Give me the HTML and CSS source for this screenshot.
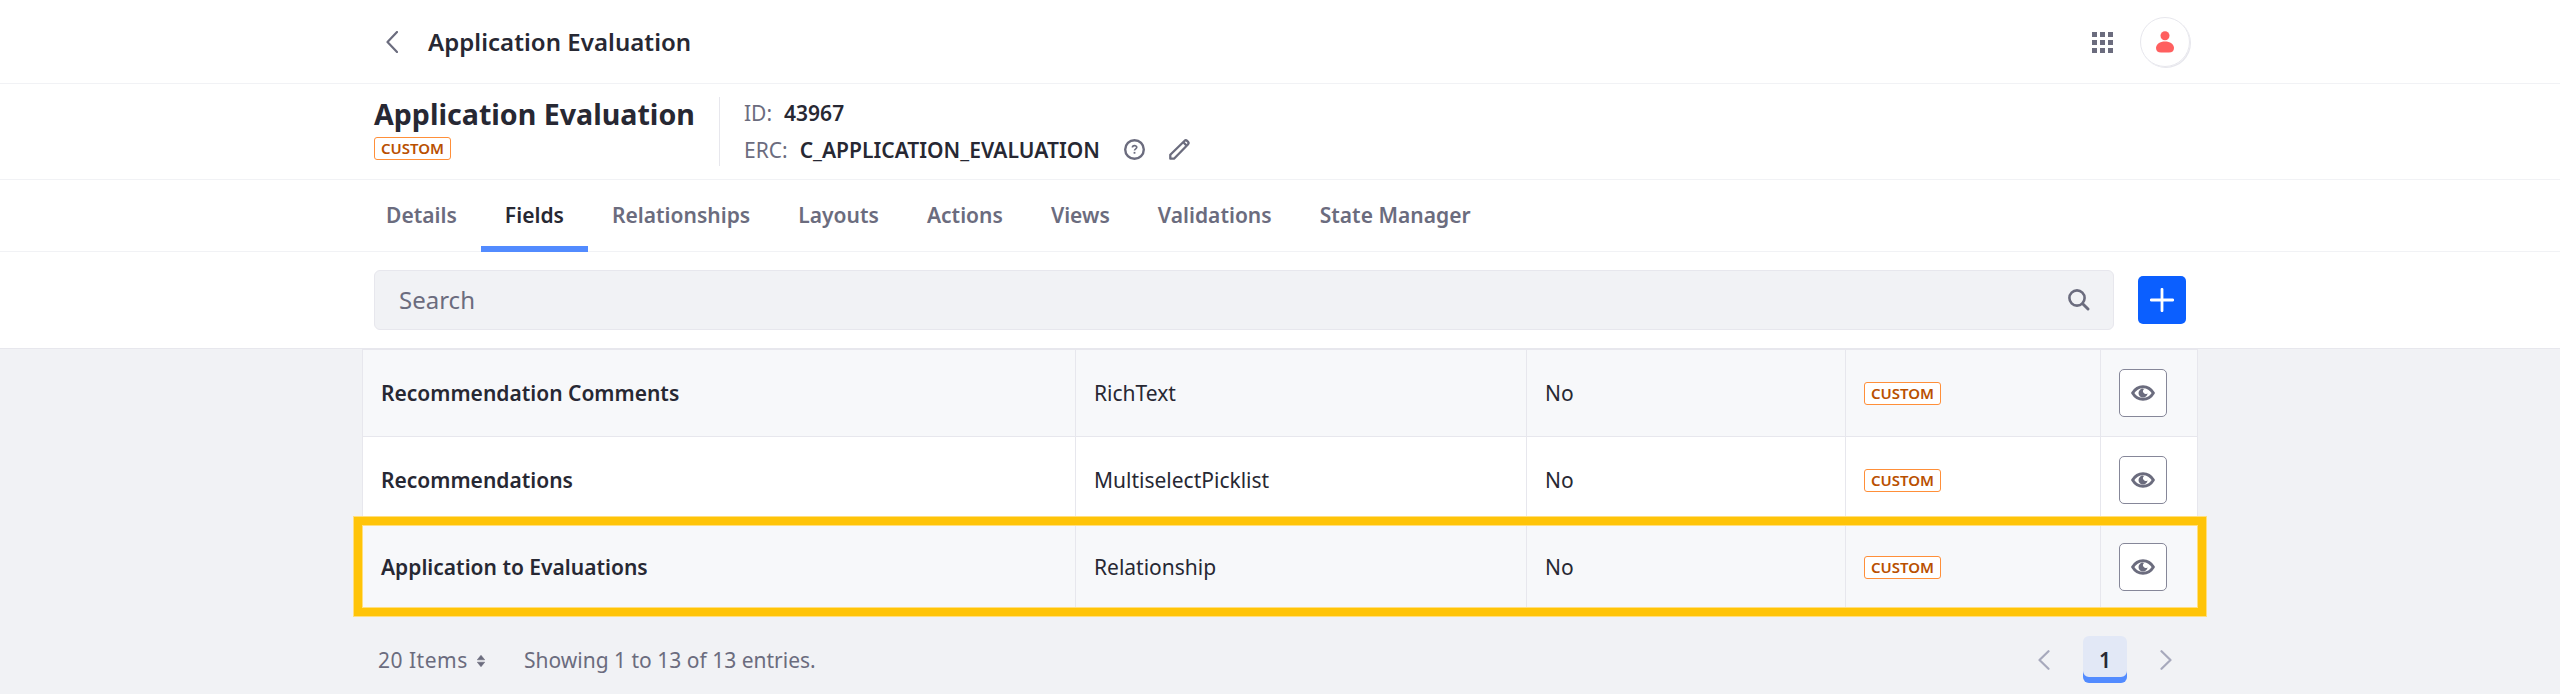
FILE: index.html
```html
<!DOCTYPE html>
<html lang="en">
<head>
<meta charset="utf-8">
<title>Application Evaluation</title>
<link rel="stylesheet" href="styles.css">
</head>
<body>
<svg class="sprite" aria-hidden="true">
  <symbol id="eye" viewBox="0 0 24 16">
    <path d="M1.600 8C6.600-.4 17.400-.4 22.400 8 17.400 16.400 6.600 16.400 1.600 8Z" fill="none" stroke="currentColor" stroke-width="2.900" stroke-linejoin="round"/>
    <path d="M12 3.600A4.500 4.500 0 1 0 16.500 8.200 2.500 2.500 0 0 1 12.900 4.300Z" fill="currentColor"/>
  </symbol>
</svg>
<header class="topbar">
  <div class="container topbar-row">
    <svg class="back" width="12" height="22" viewBox="0 0 12 22"><path d="M11 1 1.500 11 11 21" fill="none" stroke="currentColor" stroke-width="2.200" stroke-linecap="round" stroke-linejoin="round"/></svg>
    <div class="topbar-title">Application Evaluation</div>
    <svg class="waffle" width="21" height="21" viewBox="0 0 21 21" fill="currentColor"><path d="M0 0h5v5H0zM8 0h5v5H8zM16 0h5v5h-5zM0 8h5v5H0zM8 8h5v5H8zM16 8h5v5h-5zM0 16h5v5H0zM8 16h5v5H8zM16 16h5v5h-5z"/></svg>
    <div class="avatar"><svg width="18" height="22" viewBox="0 0 18 22" fill="currentColor"><circle cx="9" cy="4.800" r="4.500"/><path d="M9 10.500c5 0 9 2.700 9 6.500 0 3-2 4.500-5 4.500H5c-3 0-5-1.500-5-4.500 0-3.800 4-6.500 9-6.500Z"/></svg></div>
  </div>
</header>
<section class="object-bar">
  <div class="container object-row">
    <div class="object-name">
      <h1 class="object-title">Application Evaluation</h1>
      <span class="label label-title">CUSTOM</span>
    </div>
    <div class="object-ids">
      <div class="id-row"><span class="id-key">ID:</span><span class="id-value">43967</span></div>
      <div class="id-row"><span class="id-key">ERC:</span><span class="id-value erc">C_APPLICATION_EVALUATION</span>
        <svg class="help" width="21" height="21" viewBox="0 0 21 21" fill="none" stroke="currentColor"><circle cx="10.500" cy="10.500" r="9.300" stroke-width="2.400"/><path d="M8.400 8.600c0-2.700 4.400-2.500 4.400-.3 0 1.500-2.300 1.500-2.300 3.200" stroke-width="1.600"/><path d="M10.500 12.900v1.800" stroke-width="1.800"/></svg>
        <svg class="pencil" width="21" height="21" viewBox="0 0 21 21" fill="none" stroke="currentColor" stroke-width="2.300" stroke-linejoin="round"><path d="M1.300 19.700v-4L15.400 2c.9-.9 1.900-.9 2.700-.1l.9.9c.8.900.8 1.800-.1 2.700L5 19.700ZM14.300 3.300l3.300 3.300"/></svg>
      </div>
    </div>
  </div>
</section>
<nav class="tabs-bar">
  <div class="tabs">
    <a class="tab">Details</a>
    <a class="tab active">Fields</a>
    <a class="tab">Relationships</a>
    <a class="tab">Layouts</a>
    <a class="tab">Actions</a>
    <a class="tab">Views</a>
    <a class="tab">Validations</a>
    <a class="tab">State Manager</a>
  </div>
</nav>
<section class="search-bar">
  <div class="container search-row">
    <div class="search">
      <span>Search</span>
      <svg width="22" height="22" viewBox="0 0 22 22" fill="none" stroke="currentColor" stroke-linecap="round"><circle cx="9" cy="9" r="7.600" stroke-width="2.600"/><path d="m14.700 14.700 5.300 5.300" stroke-width="2.900"/></svg>
    </div>
    <button class="add"><svg width="24" height="24" viewBox="0 0 24 24"><path d="M12 1.300v21.400M1.300 12h21.400" stroke="#fff" stroke-width="2.800" stroke-linecap="round"/></svg></button>
  </div>
</section>
<main class="content">
  <div class="table">
    <div class="row odd">
      <div class="cell strong">Recommendation Comments</div><div class="cell">RichText</div><div class="cell">No</div>
      <div class="cell"><span class="label">CUSTOM</span></div>
      <div class="cell"><button class="view"><svg width="24" height="16"><use href="#eye"/></svg></button></div>
    </div>
    <div class="row">
      <div class="cell strong">Recommendations</div><div class="cell">MultiselectPicklist</div><div class="cell">No</div>
      <div class="cell"><span class="label">CUSTOM</span></div>
      <div class="cell"><button class="view"><svg width="24" height="16"><use href="#eye"/></svg></button></div>
    </div>
    <div class="row odd">
      <div class="cell strong">Application to Evaluations</div><div class="cell">Relationship</div><div class="cell">No</div>
      <div class="cell"><span class="label">CUSTOM</span></div>
      <div class="cell"><button class="view"><svg width="24" height="16"><use href="#eye"/></svg></button></div>
      <div class="highlight"></div>
    </div>
  </div>
  <div class="pagination">
    <span class="per-page">20 Items</span>
    <svg class="sort" width="8" height="12" viewBox="0 0 8 12" fill="currentColor" stroke="currentColor" stroke-width=".6" stroke-linejoin="round"><path d="M4 .3 7.700 4.800H.3ZM4 11.700.3 7.200h7.400Z"/></svg>
    <span class="showing">Showing 1 to 13 of 13 entries.</span>
    <svg class="prev" width="12" height="20" viewBox="0 0 12 20"><path d="M10.500 1.200 1.500 10l9 8.800" fill="none" stroke="currentColor" stroke-width="2.200" stroke-linecap="round" stroke-linejoin="round"/></svg>
    <span class="page">1</span>
    <svg class="next" width="12" height="20" viewBox="0 0 12 20"><path d="M1.500 1.200 10.500 10l-9 8.800" fill="none" stroke="currentColor" stroke-width="2.200" stroke-linecap="round" stroke-linejoin="round"/></svg>
  </div>
</main>
</body>
</html>
```
FILE: styles.css
```css
* { box-sizing: border-box; }
html, body { height: 694px; overflow: hidden; }
body {
  margin: 0;
  font-family: "Noto Sans", sans-serif;
  font-size: 21px;
  line-height: 30px;
  color: #272833;
  background: #f1f2f5;
}
svg { display: block; flex: none; }
button { padding: 0; border: 0; display: flex; align-items: center; justify-content: center; }
.sprite { position: absolute; width: 0; height: 0; }
.container { width: 1812px; margin: 0 auto; }

.topbar { height: 84px; background: #fff; border-bottom: 1px solid #f1f2f5; color: #6b6c7e; }
.topbar-row { display: flex; align-items: center; height: 84px; padding-left: 12px; }
.topbar-title { margin-left: 30px; font-size: 24px; font-weight: 600; letter-spacing: .05px; color: #272833; }
.waffle { margin-left: auto; margin-top: 1px; }
.avatar {
  display: flex; align-items: center; justify-content: center;
  width: 50px; height: 50px; margin: 0 -4px 0 27px;
  border: 1px solid #e7e7ed; border-radius: 50%; color: #ff5f5f;
  box-shadow: 1px 1px 0 0 #e7e7ed;
}

.object-bar { height: 96px; background: #fff; border-bottom: 1px solid #f1f2f5; }
.object-row { display: flex; padding-top: 13px; }
.object-name { width: 346px; height: 69px; border-right: 1px solid #e7e7ed; white-space: nowrap; }
.object-title { margin: -1px 0 5px; font-size: 28.6px; line-height: 36px; font-weight: 700; }
.object-ids { padding-left: 24px; }
.id-row { display: flex; align-items: center; height: 37px; margin-top: -3px; }
.id-row + .id-row { margin-top: 0; }
.id-key { color: #6b6c7e; }
.id-value { margin-left: 12px; font-weight: 600; }
.erc { letter-spacing: .02px; }
.help { margin-left: 24px; color: #6b6c7e; }
.pencil { margin-left: 24px; color: #6b6c7e; }

.label {
  display: flex; align-items: center; justify-content: center;
  width: 77px; height: 23px;
  border: 1px solid #ff8f39; border-radius: 3px;
  background: #fff; color: #b95000;
  font-size: 15px; line-height: 21px; font-weight: 600;
}

.tabs-bar { height: 72px; background: #fff; border-bottom: 1px solid #f1f2f5; }
.tabs { display: flex; width: 1836px; height: 72px; margin: 0 auto; }
.tab { padding: 20px 24px 0; border-bottom: 6px solid transparent; font-weight: 600; letter-spacing: .02px; color: #6b6c7e; white-space: nowrap; }
.tab.active { color: #272833; border-bottom-color: #528bff; }

.search-bar { height: 97px; background: #fff; border-bottom: 1px solid #e7e7ed; }
.search-row { display: flex; align-items: center; gap: 24px; height: 96px; }
.search {
  display: flex; align-items: center; justify-content: space-between;
  width: 1740px; height: 60px; padding: 0 23px 0 24px;
  border: 1px solid #e7e7ed; border-radius: 6px; background: #f1f2f5;
  font-size: 24px; color: #6b6c7e;
}
.add { width: 48px; height: 48px; border-radius: 5px; background: #0b5fff; }

.table { width: 1836px; margin: 0 auto; border: 1px solid #e7e7ed; border-bottom: 0; }
.row { position: relative; display: grid; grid-template-columns: 713px 451px 319px 255px 96px; height: 87px; background: #fff; border-bottom: 1px solid #e7e7ed; }
.row.odd { background: #f7f8fa; }
.cell { display: flex; align-items: center; padding-left: 18px; border-right: 1px solid #e7e7ed; }
.cell:nth-child(5) { border-right: 0; }
.strong { font-weight: 600; }
.view { width: 48px; height: 48px; border: 1px solid #868799; border-radius: 5px; background: #fff; color: #6b6c7e; }
.highlight {
  position: absolute; inset: -7px -9px -6px -9px;
  border: 8px solid #ffc408;
  box-shadow: 0 0 0 1px #ffdf80, inset 0 0 0 1px #ffdf80;
}

.pagination { display: flex; align-items: center; width: 1812px; margin: 25px auto 0; height: 48px; color: #6b6c7e; }
.per-page { margin-left: 4px; width: 90px; letter-spacing: .5px; white-space: nowrap; }
.sort { margin-left: 9px; margin-top: 2px; }
.showing { margin-left: 39px; white-space: nowrap; }
.prev { margin-left: auto; color: #a7a9bc; }
.page {
  width: 44px; height: 47px; margin: -1px 33px 0; padding-top: 9px;
  border-radius: 6px; background: #e2e8f6; box-shadow: inset 0 -6px #528bff;
  text-align: center; font-weight: 600; color: #272833;
}
.next { color: #a7a9bc; margin-right: 14px; }
```
